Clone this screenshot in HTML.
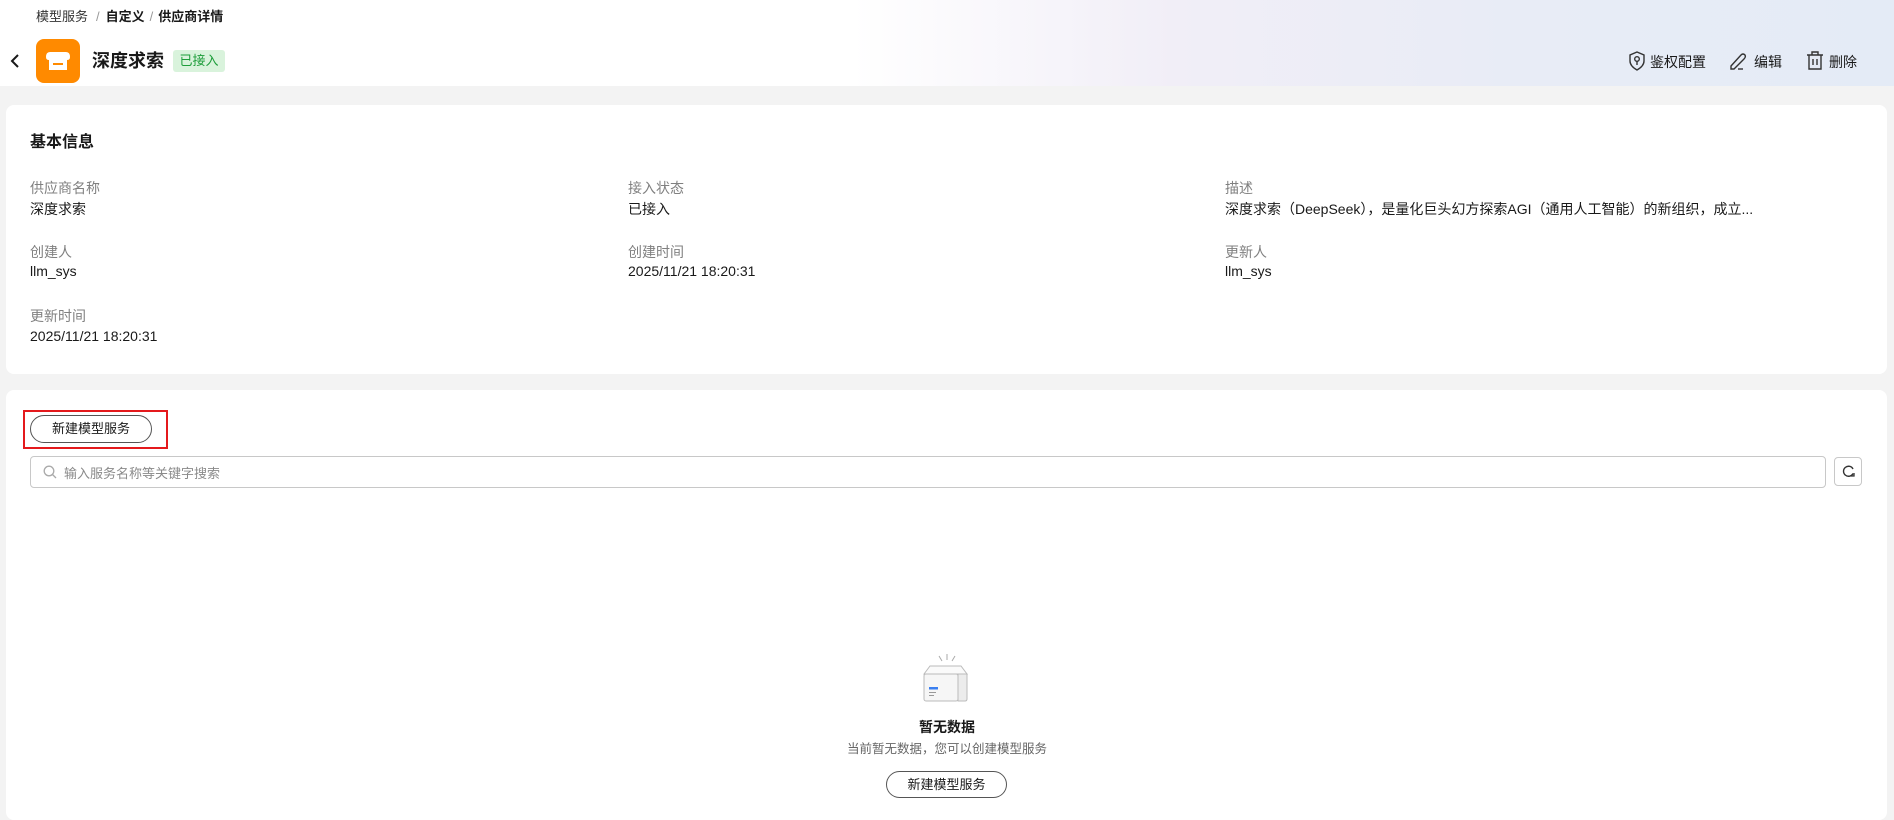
<!DOCTYPE html>
<html><head><meta charset="utf-8"><style>
*{box-sizing:border-box;margin:0;padding:0}
body{width:1894px;height:808px;overflow:hidden;background:#f3f3f3;font-family:"Liberation Sans","Noto Sans CJK SC",sans-serif;color:#191919;position:relative}
.hdr{position:absolute;left:0;top:0;width:1894px;height:86px;background:linear-gradient(90deg,#fff 0%,#fff 45%,#f1eef7 62%,#e8ecf6 80%,#e4ebf6 100%)}
.abs{position:absolute;white-space:nowrap}
.card{position:absolute;background:#fff;border-radius:8px}
.lbl{font-size:14px;color:#808080}
.val{font-size:14px;color:#191919}
</style></head><body>
<div class="hdr"></div>
<div class="abs" style="left:36px;top:9px;font-size:13px;line-height:16px"><span style="color:#333">模型服务</span><span style="color:#999;margin:0 6px 0 8px">/</span><span style="font-weight:bold">自定义</span><span style="color:#999;margin:0 5px">/</span><span style="font-weight:bold">供应商详情</span></div>
<svg class="abs" style="left:8px;top:53px" width="14" height="16" viewBox="0 0 14 16"><path d="M10 2 L4 8 L10 14" fill="none" stroke="#191919" stroke-width="2"/></svg>
<div class="abs" style="left:36px;top:39px;width:44px;height:44px;border-radius:8px;background:#ff8a00"></div>
<svg class="abs" style="left:44px;top:47px" width="28" height="28" viewBox="0 0 28 28"><path d="M6 5 H22 Q26 5 26 10 Q26 13 23 13 V23 H5 V13 Q2 13 2 10 Q2 5 6 5Z" fill="#fff"/><rect x="9" y="16" width="10" height="2" fill="#ff8a00"/></svg>
<div class="abs" style="left:92px;top:49px;font-size:18px;font-weight:bold;line-height:24px">深度求索</div>
<div class="abs" style="left:173px;top:50px;width:52px;height:22px;background:#d9f3dc;border-radius:3px;color:#1d9d3a;font-size:13px;line-height:22px;text-align:center">已接入</div>
<svg class="abs" style="left:1628px;top:51px" width="18" height="20" viewBox="0 0 18 20"><path d="M9 1 L16 4 V10 Q16 15 9 19 Q2 15 2 10 V4Z" fill="none" stroke="#333" stroke-width="1.4"/><circle cx="9" cy="8" r="2.3" fill="none" stroke="#333" stroke-width="1.4"/><path d="M9 10.3 V14" stroke="#333" stroke-width="1.4"/></svg>
<div class="abs" style="left:1650px;top:52px;font-size:14px">鉴权配置</div>
<svg class="abs" style="left:1728px;top:51px" width="20" height="20" viewBox="0 0 20 20"><path d="M3 15 L13 4 Q15 2 17 4 Q18 6 16 8 L6 18 H3Z" fill="none" stroke="#333" stroke-width="1.4"/><path d="M10 18 H15" stroke="#333" stroke-width="1.4"/></svg>
<div class="abs" style="left:1754px;top:52px;font-size:14px">编辑</div>
<svg class="abs" style="left:1806px;top:50px" width="18" height="21" viewBox="0 0 18 21"><path d="M1 5 H17 M6 5 V2 H12 V5 M3 5 V19 H15 V5 M7 9 V15 M11 9 V15" fill="none" stroke="#333" stroke-width="1.4"/></svg>
<div class="abs" style="left:1829px;top:52px;font-size:14px">删除</div>

<div class="card" style="left:6px;top:105px;width:1881px;height:269px"></div>
<div class="abs" style="left:30px;top:128px;font-size:16px;font-weight:bold">基本信息</div>
<div class="abs lbl" style="left:30px;top:178px">供应商名称</div><div class="abs val" style="left:30px;top:199px">深度求索</div>
<div class="abs lbl" style="left:628px;top:178px">接入状态</div><div class="abs val" style="left:628px;top:199px">已接入</div>
<div class="abs lbl" style="left:1225px;top:178px">描述</div><div class="abs val" style="left:1225px;top:199px">深度求索（DeepSeek），是量化巨头幻方探索AGI（通用人工智能）的新组织，成立...</div>
<div class="abs lbl" style="left:30px;top:242px">创建人</div><div class="abs val" style="left:30px;top:263px">llm_sys</div>
<div class="abs lbl" style="left:628px;top:242px">创建时间</div><div class="abs val" style="left:628px;top:263px">2025/11/21 18:20:31</div>
<div class="abs lbl" style="left:1225px;top:242px">更新人</div><div class="abs val" style="left:1225px;top:263px">llm_sys</div>
<div class="abs lbl" style="left:30px;top:306px">更新时间</div><div class="abs val" style="left:30px;top:328px">2025/11/21 18:20:31</div>

<div class="card" style="left:6px;top:390px;width:1881px;height:430px"></div>
<div class="abs" style="left:23px;top:410px;width:145px;height:39px;border:2px solid #e4191c"></div>
<div class="abs" style="left:30px;top:415px;width:122px;height:28px;border:1px solid #555;border-radius:14px;font-size:13px;line-height:26px;text-align:center">新建模型服务</div>
<div class="abs" style="left:30px;top:456px;width:1796px;height:32px;border:1px solid #c8c8c8;border-radius:4px"></div>
<svg class="abs" style="left:43px;top:465px" width="14" height="14" viewBox="0 0 14 14"><circle cx="6" cy="6" r="4.8" fill="none" stroke="#aaa" stroke-width="1.3"/><path d="M9.5 9.5 L13 13" stroke="#aaa" stroke-width="1.3"/></svg>
<div class="abs" style="left:64px;top:463px;font-size:13px;color:#8a8a8a">输入服务名称等关键字搜索</div>
<div class="abs" style="left:1834px;top:457px;width:28px;height:29px;border:1px solid #c8c8c8;border-radius:4px"></div>
<svg class="abs" style="left:1841px;top:464px" width="15" height="15" viewBox="0 0 15 15"><path d="M12 9.5 A5 5 0 1 1 12 5" fill="none" stroke="#333" stroke-width="1.4"/><path d="M10 12 L13 12 L13 9" fill="none" stroke="#333" stroke-width="1.3"/></svg>

<svg class="abs" style="left:916px;top:652px" width="62" height="52" viewBox="0 0 62 52"><path d="M23 4 L26 9 M31 2 V8 M39 4 L36 9" stroke="#aaa" stroke-width="1"/><path d="M8 22 L14 14 H45 L51 22Z" fill="#fafafa" stroke="#bbb"/><rect x="8" y="22" width="34" height="27" rx="2" fill="#f6f6f6" stroke="#bbb"/><path d="M42 22 H51 V47 Q51 49 49 49 H42Z" fill="#ececec" stroke="#bbb"/><rect x="13" y="35" width="9" height="2.5" fill="#3a7ff0"/><rect x="13" y="40" width="7" height="1" fill="#999"/><rect x="13" y="43" width="5" height="1" fill="#999"/></svg>
<div class="abs" style="left:0;width:1894px;text-align:center;top:717px;font-size:14px;font-weight:bold">暂无数据</div>
<div class="abs" style="left:0;width:1894px;text-align:center;top:738px;font-size:12.5px;color:#666">当前暂无数据，您可以创建模型服务</div>
<div class="abs" style="left:886px;top:771px;width:121px;height:27px;border:1px solid #555;border-radius:14px;font-size:13px;line-height:25px;text-align:center">新建模型服务</div>
</body></html>
